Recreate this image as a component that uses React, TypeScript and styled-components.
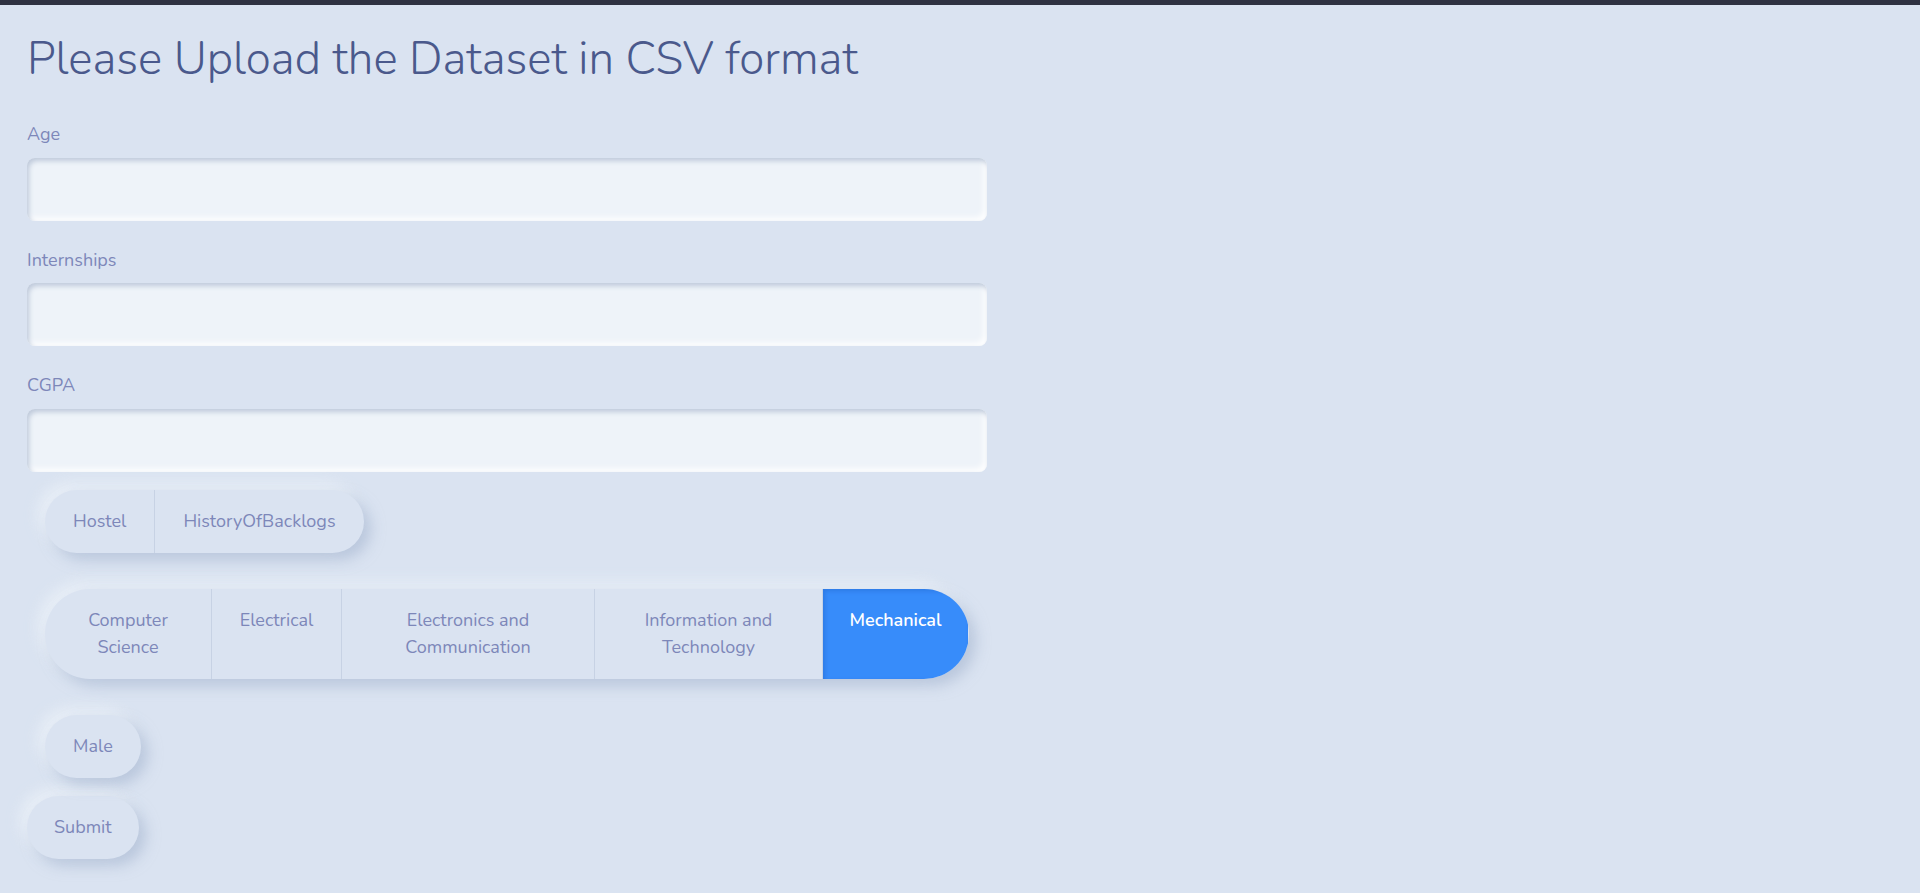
import React, { useState } from 'react'
import styled, { createGlobalStyle, css } from 'styled-components'

const GlobalStyle = createGlobalStyle`
	html, body {
		margin: 0;
		padding: 0;
		background: #dae3f1;
	}
	body {
		font-family: 'Nunito', 'Lato', 'Noto Sans', sans-serif;
	}
	* {
		box-sizing: border-box;
	}
`

const fields = ['Age', 'Internships', 'CGPA']
const flags = ['Hostel', 'HistoryOfBacklogs']
const departments: { name: string; width: number }[] = [
	{ name: 'Computer Science', width: 166 },
	{ name: 'Electrical', width: 130 },
	{ name: 'Electronics and Communication', width: 253 },
	{ name: 'Information and Technology', width: 228 },
	{ name: 'Mechanical', width: 146 },
]

export default function App() {
	const [values, setValues] = useState<Record<string, string>>({})
	const [picked, setPicked] = useState<string[]>([])
	const [dept, setDept] = useState('Mechanical')
	const [male, setMale] = useState(false)

	const toggle = (name: string) =>
		setPicked((p) => (p.includes(name) ? p.filter((x) => x !== name) : [...p, name]))

	return (
		<Page>
			<GlobalStyle />
			<TopBar />
			<Main>
				<Title>Please Upload the Dataset in CSV format</Title>
				<Form onSubmit={(e) => e.preventDefault()}>
					<FieldList>
						{fields.map((f) => (
							<Field key={f}>
								<Label htmlFor={f}>{f}</Label>
								<Input
									id={f}
									value={values[f] || ''}
									onChange={(e) => setValues({ ...values, [f]: e.target.value })}
								/>
							</Field>
						))}
					</FieldList>

					<Group>
						{flags.map((f) => (
							<Segment key={f} type="button" $active={picked.includes(f)} onClick={() => toggle(f)}>
								{f}
							</Segment>
						))}
					</Group>

					<Group $full>
						{departments.map((d) => (
							<Segment
								key={d.name}
								type="button"
								$width={d.width}
								$active={dept === d.name}
								onClick={() => setDept(d.name)}
							>
								{d.name}
							</Segment>
						))}
					</Group>

					<Group>
						<Segment type="button" $active={male} onClick={() => setMale(!male)}>
							Male
						</Segment>
					</Group>

					<SubmitButton type="submit">Submit</SubmitButton>
				</Form>
			</Main>
		</Page>
	)
}

const Page = styled.div`
	min-height: 100vh;
	background: #dae3f1;
`

const TopBar = styled.div`
	height: 5px;
	background: #2f3242;
`

const Main = styled.main`
	padding: 26px 27px 40px;
`

const Title = styled.h1`
	margin: 0;
	font-size: 45.7px;
	line-height: 56px;
	font-weight: 300;
	color: #4a598c;
`

const Form = styled.form`
	width: 960px;
	margin-top: 34px;
`

const FieldList = styled.div`
	display: flex;
	flex-direction: column;
	gap: 26px;
`

const Field = styled.div`
	display: flex;
	flex-direction: column;
`

const Label = styled.label`
	font-size: 18px;
	line-height: 27px;
	color: #7d87b9;
	margin-bottom: 9.5px;
`

const Input = styled.input`
	height: 63px;
	width: 100%;
	border: none;
	outline: none;
	border-radius: 8px;
	padding: 0 18px;
	font-family: inherit;
	font-size: 18px;
	color: #4a598c;
	background: #eef3f9;
	box-shadow: inset 2px 3px 5px #bfcadb, inset -3px -3px 6px #ffffff;
`

const Group = styled.div<{ $full?: boolean }>`
	display: ${(p) => (p.$full ? 'flex' : 'inline-flex')};
	margin: 18px;
	border-radius: 50px;
	overflow: hidden;
	background: #dae3f1;
	box-shadow: 7px 7px 14px rgba(160, 176, 204, 0.55), -7px -7px 14px rgba(238, 243, 250, 0.7);
	vertical-align: top;
`

const Segment = styled.button<{ $active?: boolean; $width?: number }>`
	display: flex;
	align-items: flex-start;
	justify-content: center;
	border: none;
	margin: 0;
	font-family: inherit;
	font-size: 18px;
	line-height: 27px;
	padding: 18px 28px;
	text-align: center;
	cursor: pointer;
	color: #7d87b9;
	background: transparent;
	${(p) =>
		p.$width &&
		css`
			flex: 0 0 ${p.$width}px;
			padding: 18px 20px;
		`}

	& + & {
		border-left: 1px solid #c7d2e4;
	}

	${(p) =>
		p.$active &&
		css`
			background: #378cfa;
			color: #ffffff;
			font-weight: 600;
			box-shadow: inset 2px 2px 4px rgba(30, 90, 190, 0.35);
		`}
`

const SubmitButton = styled.button`
	display: block;
	border: none;
	font-family: inherit;
	font-size: 18px;
	line-height: 27px;
	padding: 18px 27px;
	border-radius: 50px;
	cursor: pointer;
	color: #7d87b9;
	background: #dae3f1;
	box-shadow: 7px 7px 14px rgba(160, 176, 204, 0.55), -7px -7px 14px rgba(238, 243, 250, 0.7);
`
